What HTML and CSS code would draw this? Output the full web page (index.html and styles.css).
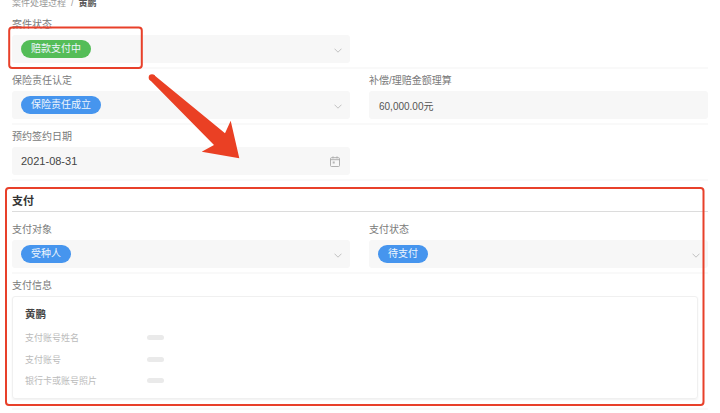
FILE: index.html
```html
<!DOCTYPE html>
<html lang="zh-CN">
<head>
<meta charset="utf-8">
<title>案件处理过程</title>
<link rel="stylesheet" href="styles.css">
</head>
<body>
<main class="page">
  <nav class="crumbs"><span>案件处理过程</span><span class="crumb-sep">/</span><strong>黄鹏</strong></nav>

  <section class="row">
    <div class="field">
      <div class="label">案件状态</div>
      <div class="box"><span class="pill pill-green">赔款支付中</span>
        <svg class="chev" viewBox="0 0 8 5"><path d="M.5.7 4 4.2 7.5.7"/></svg></div>
    </div>
    <div></div>
  </section>

  <section class="row">
    <div class="field">
      <div class="label">保险责任认定</div>
      <div class="box"><span class="pill">保险责任成立</span>
        <svg class="chev" viewBox="0 0 8 5"><path d="M.5.7 4 4.2 7.5.7"/></svg></div>
    </div>
    <div class="field">
      <div class="label">补偿/理赔金额理算</div>
      <div class="box"><span class="value">60,000.00元</span></div>
    </div>
  </section>

  <section class="row">
    <div class="field">
      <div class="label">预约签约日期</div>
      <div class="box box-text"><span class="date">2021-08-31</span>
        <svg class="cal" viewBox="0 0 10 11"><path d="M1.5 1.7h7a1 1 0 0 1 1 1v6.8a1 1 0 0 1-1 1h-7a1 1 0 0 1-1-1V2.700a1 1 0 0 1 1-1ZM.5 3.700h9M3 .4v2M7 .4v2"/><rect x="2.700" y="5.500" width="2" height="2"/></svg></div>
    </div>
    <div></div>
  </section>

  <h2 class="section-title">支付</h2>

  <section class="row row-first">
    <div class="field">
      <div class="label">支付对象</div>
      <div class="box"><span class="pill">受种人</span>
        <svg class="chev" viewBox="0 0 8 5"><path d="M.5.7 4 4.2 7.5.7"/></svg></div>
    </div>
    <div class="field">
      <div class="label">支付状态</div>
      <div class="box"><span class="pill">待支付</span>
        <svg class="chev" viewBox="0 0 8 5"><path d="M.5.7 4 4.2 7.5.7"/></svg></div>
    </div>
  </section>

  <section class="row-wide">
    <div class="label">支付信息</div>
    <div class="card">
      <div class="card-title">黄鹏</div>
      <div class="info"><span class="info-key">支付账号姓名</span><span class="dash"></span></div>
      <div class="info"><span class="info-key">支付账号</span><span class="dash"></span></div>
      <div class="info"><span class="info-key">银行卡或账号照片</span><span class="dash"></span></div>
    </div>
  </section>
</main>

<svg class="marks" viewBox="0 0 720 413" aria-hidden="true">
  <rect class="mark-box" x="9.200" y="27.500" width="132.600" height="40.600" rx="3"/>
  <rect class="mark-box" x="6" y="188" width="697.500" height="217" rx="3"/>
  <circle class="mark-fill" cx="152" cy="77.500" r="3.300"/>
  <polygon class="mark-fill" points="149.700,79.800 214,145 201.700,151.700 239.300,158.300 230.700,120.700 225,133.300 154.300,75.200"/>
</svg>
</body>
</html>
```

FILE: styles.css
```css
* { box-sizing: border-box; }

html, body {
  margin: 0;
  height: 413px;
  overflow: hidden;
  background: #fff;
}

body {
  position: relative;
  font-family: "Liberation Sans", "Noto Sans CJK SC", sans-serif;
  font-size: 10px;
  color: #444;
}

.page {
  margin-top: -4px;
  padding: 0 12px;
  width: 720px;
}

.crumbs {
  display: flex;
  gap: 4px;
  height: 17px;
  line-height: 14px;
  font-size: 9px;
  color: #999;
}

.crumbs strong {
  color: #555;
  font-weight: 700;
}

.crumb-sep { padding: 0 1px; }

.row {
  display: grid;
  grid-template-columns: 338px 339px;
  column-gap: 19px;
  padding: 4px 0;
  border-bottom: 2px solid #f9f9f9;
}

.row-first { margin-top: 6px; }

.row-wide {
  padding: 4px 0 9px;
  border-bottom: 2px solid #f9f9f9;
}

.label {
  height: 14px;
  line-height: 16px;
  margin-bottom: 4px;
  font-size: 10px;
  color: #7a7a7a;
}

.box {
  display: flex;
  align-items: center;
  justify-content: space-between;
  height: 28px;
  padding: 0 8px 0 9px;
  border-radius: 3px;
  background: #f7f7f7;
}

.pill {
  height: 18px;
  line-height: 18px;
  padding: 0 10px;
  border-radius: 9px;
  background: #4695ee;
  color: #eef5fd;
  font-size: 10px;
}

.pill-green { background: #54bd58; }

.value {
  padding-left: 1px;
  font-size: 10px;
  color: #555;
}

.date {
  font-size: 11px;
  color: #444;
}

.chev {
  width: 8px;
  height: 5px;
  margin-top: 3px;
  fill: none;
  stroke: #bbb;
  stroke-width: .9;
}

.cal {
  width: 10px;
  height: 11px;
  margin-right: 2px;
  fill: none;
  stroke: #a8a8a8;
  stroke-width: .9;
}

.cal rect {
  fill: #b5b5b5;
  stroke: none;
}

.section-title {
  margin: 0;
  padding-top: 12px;
  height: 31px;
  line-height: 16px;
  font-size: 11px;
  font-weight: 700;
  color: #333;
  border-bottom: 1px solid #dcdcdc;
}

.card {
  width: 686px;
  height: 103px;
  padding: 9px 12px;
  border: 1px solid #f0f0f0;
  border-radius: 3px;
  box-shadow: 0 1px 2px rgba(0, 0, 0, .06);
}

.card-title {
  height: 16px;
  line-height: 16px;
  margin-bottom: 5px;
  font-size: 10.500px;
  font-weight: 700;
  color: #444;
}

.info {
  display: flex;
  align-items: center;
  height: 21.500px;
}

.info-key {
  width: 122px;
  font-size: 9px;
  color: #bbb;
}

.dash {
  width: 17px;
  height: 5px;
  border-radius: 3px;
  background: #eaeaea;
}

.marks {
  position: absolute;
  left: 0;
  top: 0;
  width: 720px;
  height: 413px;
  pointer-events: none;
}

.mark-box {
  fill: none;
  stroke: #e8402a;
  stroke-width: 2;
}

.mark-fill { fill: #ea4024; }
```
